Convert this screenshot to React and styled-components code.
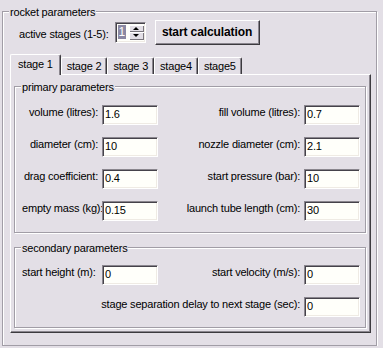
import React from 'react';
import styled, { createGlobalStyle } from 'styled-components';

const GlobalStyle = createGlobalStyle`
  html, body {
    margin: 0;
    background: #e3dfe6;
  }
  body {
    font-family: "Liberation Sans", Arial, sans-serif;
    font-size: 11px;
    letter-spacing: -0.2px;
    color: #000;
  }
`

const Page = styled.div`
  padding: 11px 6px 0 2px;
`

const Group = styled.div`
  position: relative;
  border: 1px solid #a19da6;
  box-shadow: inset 1px 1px 0 #fff, 1px 1px 0 #fff;
  padding: ${p => p.$pad || '0'};
  margin-top: ${p => p.$gap || '0'};
`

const Legend = styled.span`
  position: absolute;
  top: -6px;
  left: 6px;
  padding: 0 1px;
  line-height: 13px;
  background: #e3dfe6;
  white-space: nowrap;
`

const Header = styled.div`
  display: flex;
  align-items: center;
  height: 24px;
  padding: 8px 0 0 16px;
`

const HeaderLabel = styled.span`
  margin-right: 6px;
  padding-top: 3px;
`

const Spin = styled.div`
  display: flex;
  align-items: stretch;
  width: 31px;
  height: 21px;
  box-sizing: border-box;
  border: 1px solid;
  border-color: #8a868e #fff #fff #8a868e;
  box-shadow: inset 1px 1px 0 #45424a, inset -1px -1px 0 #efebe4;
  background: #fffffa;
  padding: 2px 1px 2px 2px;
`

const SpinValue = styled.span`
  align-self: center;
  padding: 0 1px;
  line-height: 14px;
  background: #8b88a3;
  color: #fff;
  font-size: 12px;
`

const SpinButtons = styled.div`
  margin-left: auto;
  display: flex;
  flex-direction: column;
  width: 15px;
`

const SpinArrow = styled.div`
  flex: 1;
  display: flex;
  align-items: center;
  justify-content: center;
  background: #e3dfe6;
  box-shadow: inset 1px 1px 0 #fff, inset -1px -1px 0 #79757d;
  &::after {
    content: '';
    border-left: 3px solid transparent;
    border-right: 3px solid transparent;
    ${p => p.$down ? 'border-top: 3px solid #000;' : 'border-bottom: 3px solid #000;'}
  }
`

const Button = styled.button`
  margin-left: 9px;
  width: 105px;
  height: 25px;
  background: #e3dfe6;
  border: 1px solid;
  border-color: #fff #3c3a3f #3c3a3f #fff;
  box-shadow: inset -1px -1px 0 #8a868e;
  font-family: "Liberation Sans", Arial, sans-serif;
  font-size: 12px;
  font-weight: bold;
  letter-spacing: -0.1px;
  color: #000;
  padding: 0;
`

const Tabs = styled.div`
  margin: 10px 5px 6px 7px;
`

const TabStrip = styled.div`
  display: flex;
  align-items: flex-end;
  height: 20px;
`

const Tab = styled.div`
  position: relative;
  box-sizing: border-box;
  height: ${p => p.$active ? '21px' : '17px'};
  margin-bottom: ${p => p.$active ? '-1px' : '0'};
  z-index: ${p => p.$active ? 1 : 0};
  padding: ${p => p.$active ? '2px 7px 0' : '1px 5px 0'};
  line-height: 14px;
  background: #e3dfe6;
  border-top: 1px solid #fff;
  border-left: 1px solid #fff;
  border-right: 1px solid #3c3a3f;
  border-radius: 2px 2px 0 0;
  box-shadow: inset -1px 0 0 #8a868e;
  white-space: nowrap;
`

const Panel = styled.div`
  border-top: 1px solid #fff;
  border-left: 1px solid #fff;
  border-right: 1px solid #3c3a3f;
  border-bottom: 1px solid #3c3a3f;
  box-shadow: inset -1px -1px 0 #8a868e;
  padding: 11px 4px 4px 3px;
`

const FieldGrid = styled.div`
  display: grid;
  grid-template-columns: 76px 56px 1fr 56px;
  column-gap: 4px;
  row-gap: 12px;
`

const Label = styled.span`
  grid-column: ${p => p.$span || 'auto'};
  text-align: ${p => p.$left ? 'left' : 'right'};
  line-height: 14px;
  white-space: nowrap;
`

const Field = styled.input`
  width: 56px;
  height: 20px;
  box-sizing: border-box;
  margin: 0;
  border: 1px solid;
  border-color: #8a868e #fff #fff #8a868e;
  box-shadow: inset 1px 1px 0 #45424a, inset -1px -1px 0 #efebe4;
  background: #fffffa;
  padding: 0 2px 2px;
  font-family: "Liberation Sans", Arial, sans-serif;
  font-size: 11px;
  letter-spacing: -0.2px;
  color: #000;
  outline: none;
`

const primary = [
  ['volume (litres):', '1.6', 'fill volume (litres):', '0.7'],
  ['diameter (cm):', '10', 'nozzle diameter (cm):', '2.1'],
  ['drag coefficient:', '0.4', 'start pressure (bar):', '10'],
  ['empty mass (kg):', '0.15', 'launch tube length (cm):', '30'],
]

const App = () => {
  return (
    <Page>
      <GlobalStyle />
      <Group $pad="0 0 6px 0">
        <Legend>rocket parameters</Legend>
        <Header>
          <HeaderLabel>active stages (1-5):</HeaderLabel>
          <Spin>
            <SpinValue>1</SpinValue>
            <SpinButtons>
              <SpinArrow />
              <SpinArrow $down />
            </SpinButtons>
          </Spin>
          <Button>start calculation</Button>
        </Header>
        <Tabs>
          <TabStrip>
            <Tab $active>stage 1</Tab>
            <Tab>stage 2</Tab>
            <Tab>stage 3</Tab>
            <Tab>stage4</Tab>
            <Tab>stage5</Tab>
          </TabStrip>
          <Panel>
            <Group $pad="18px 5px 11px 7px">
              <Legend>primary parameters</Legend>
              <FieldGrid>
                {primary.map((r) => (
                  <React.Fragment key={r[0]}>
                    <Label>{r[0]}</Label>
                    <Field defaultValue={r[1]} />
                    <Label>{r[2]}</Label>
                    <Field defaultValue={r[3]} />
                  </React.Fragment>
                ))}
              </FieldGrid>
            </Group>
            <Group $pad="17px 5px 10px 7px" $gap="14px">
              <Legend>secondary parameters</Legend>
              <FieldGrid>
                <Label $left>start height (m):</Label>
                <Field defaultValue="0" />
                <Label>start velocity (m/s):</Label>
                <Field defaultValue="0" />
                <Label $span="1 / 4">stage separation delay to next stage (sec):</Label>
                <Field defaultValue="0" />
              </FieldGrid>
            </Group>
          </Panel>
        </Tabs>
      </Group>
    </Page>
  );
};

export default App;
